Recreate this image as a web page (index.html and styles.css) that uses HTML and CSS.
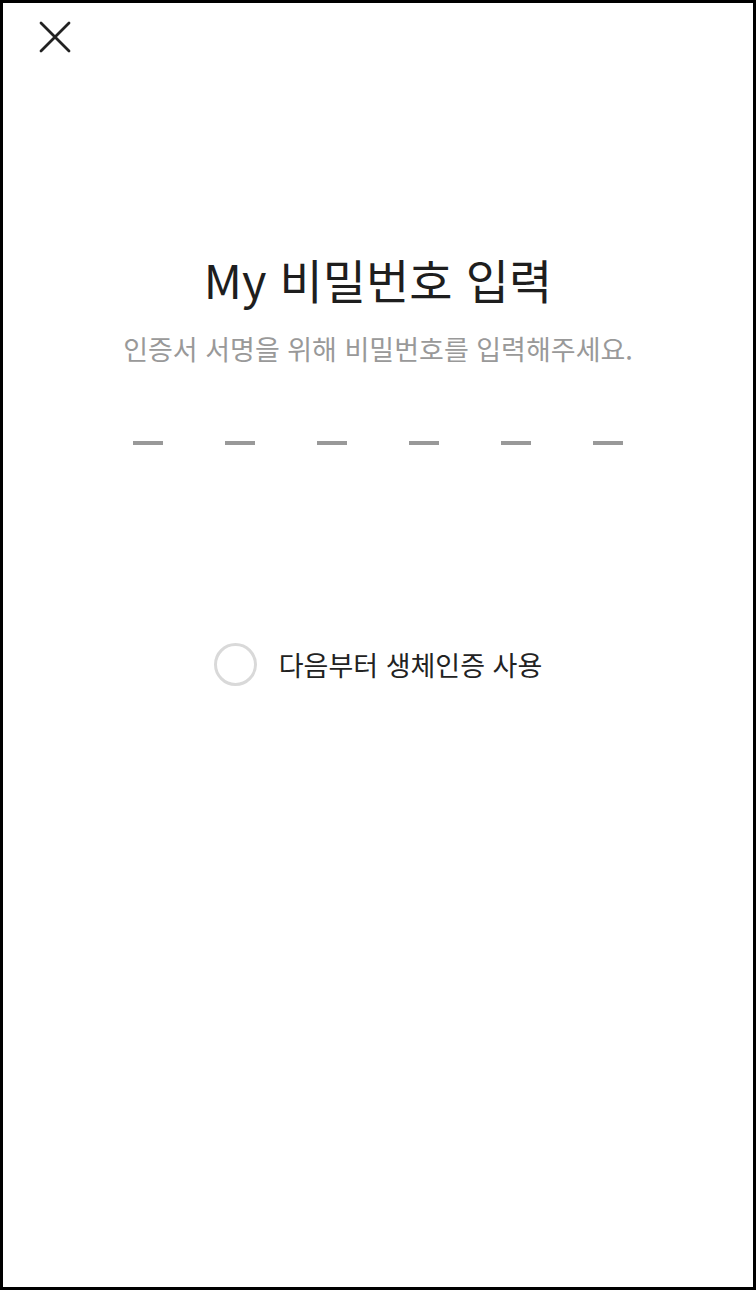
FILE: index.html
```html
<!DOCTYPE html>
<html lang="ko">
<head>
<meta charset="utf-8">
<title>My 비밀번호 입력</title>
<link rel="stylesheet" href="styles.css">
</head>
<body>
<div class="screen">
  <header class="topbar">
    <button class="close" aria-label="닫기">
      <svg width="32" height="32" viewBox="0 0 32 32" fill="none" stroke="#222" stroke-width="2.8" stroke-linecap="round">
        <path d="M2 2 L30 30 M30 2 L2 30"/>
      </svg>
    </button>
  </header>
  <main class="content">
    <h1 class="title">My 비밀번호 입력</h1>
    <p class="subtitle">인증서 서명을 위해 비밀번호를 입력해주세요.</p>
    <div class="pin">
      <span class="dash"></span>
      <span class="dash"></span>
      <span class="dash"></span>
      <span class="dash"></span>
      <span class="dash"></span>
      <span class="dash"></span>
    </div>
    <label class="bio">
      <span class="radio"></span>
      <span class="bio-text">다음부터 생체인증 사용</span>
    </label>
  </main>
</div>
</body>
</html>
```
FILE: styles.css
```css
* { box-sizing: border-box; }
html, body { margin: 0; padding: 0; background: #fff; }
body {
  font-family: "Noto Sans CJK KR", "Noto Sans", sans-serif;
  color: #222;
}
.screen {
  width: 756px;
  height: 1290px;
  border: 3px solid #000;
  display: flex;
  flex-direction: column;
  background: #fff;
}
.topbar {
  height: 70px;
  padding: 18px 0 0 36px;
}
.close {
  border: 0;
  background: none;
  padding: 0;
  width: 32px;
  height: 32px;
  display: block;
}
.close svg { display: block; }
.content {
  display: flex;
  flex-direction: column;
  align-items: center;
}
.title {
  margin: 176px 0 0;
  font-size: 47px;
  font-weight: 400;
  line-height: 60px;
  color: #1e1e1e;
  letter-spacing: 0;
}
.subtitle {
  margin: 22px 0 0;
  font-size: 27px;
  line-height: 36px;
  color: #999;
}
.pin {
  margin-top: 74px;
  display: flex;
  gap: 62px;
}
.dash {
  width: 30px;
  height: 4px;
  background: #999;
}
.bio {
  margin-top: 198px;
  display: flex;
  align-items: center;
  gap: 22px;
}
.radio {
  width: 43px;
  height: 43px;
  border-radius: 50%;
  border: 3px solid #d9d9d9;
}
.bio-text {
  font-size: 27px;
  line-height: 36px;
  color: #222;
}
```
